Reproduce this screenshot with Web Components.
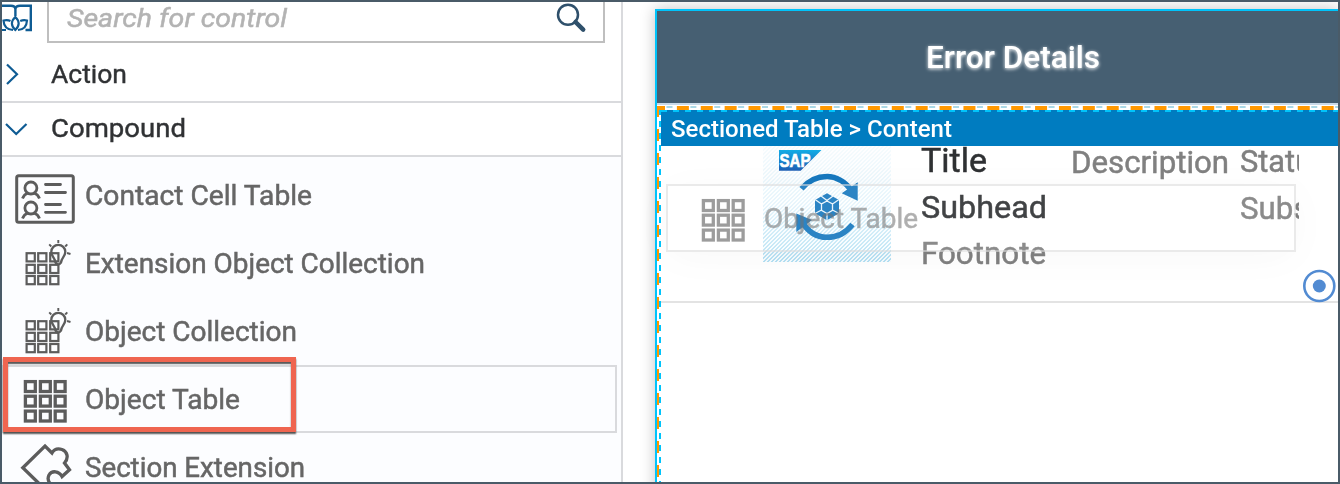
<!DOCTYPE html>
<html lang="en">
<head>
<meta charset="utf-8">
<title>Control editor</title>
<style>
html,body{margin:0;height:100%;overflow:hidden;background:#fff}
body{font-family:Roboto,"Open Sans",sans-serif;color:#2f3133}
</style>
</head>
<body>
<editor-app></editor-app>
<script>
const define = (name, html, setup) => customElements.define(name, class extends HTMLElement {
  constructor() {
    super();
    this.attachShadow({mode: 'open'});
  }
  connectedCallback() {
    const t = document.createElement('template');
    t.innerHTML = typeof html === 'function' ? html(this) : html;
    this.shadowRoot.replaceChildren(t.content.cloneNode(true));
    if (setup) setup(this);
  }
});

/* One line of text, condensed or widened to the advance width in "w". */
define('fit-label', `<style>
  :host{display:block;white-space:nowrap}
  span{display:inline-block;transform-origin:0 50%;white-space:nowrap}
</style><span><slot></slot></span>`, el => {
  const s = el.shadowRoot.querySelector('span');
  const w = s.offsetWidth && s.getBoundingClientRect().width;
  if (w && el.getAttribute('w')) {
    const k = Number(el.getAttribute('w')) / w;
    s.style.transform = `scaleX(${k})`;
    el.style.width = el.getAttribute('w') + 'px';
  }
});

const squares = (xs, ys, size, sw) => ys.map(y => xs.map(x =>
  `<rect x="${x}" y="${y}" width="${size}" height="${size}" stroke-width="${sw}"/>`).join('')).join('');

const icons = {
  contact: `<rect x="14.700" y="14.700" width="56.600" height="46.600" rx="2" stroke-width="3"/>
    <g stroke-width="2.800"><circle cx="28.900" cy="27" r="6"/><path d="M20.500 37.500q1.500-4.200 5.500-5.500M37.500 37.500q-1.500-4.200-5.500-5.500"/>
    <circle cx="28.900" cy="47" r="6"/><path d="M20.500 57.500q1.500-4.200 5.500-5.500M37.500 57.500q-1.500-4.200-5.500-5.500"/>
    <path d="M43.500 23.500H58.500M43.500 31.500H63.500M43.500 43.500H58.500M43.500 51.300H63.500" stroke-linecap="round"/></g>`,
  collection: squares([24.6, 36.2, 48.2], [24.2, 35.8, 47], 8.2, 2.2) +
    `<path d="M53.500 33.500C53 29 49.300 27.500 49.300 22.800a7 7 0 0 1 14 0C63.300 27.500 59.500 29 59 33.500Q56.200 37.500 53.500 33.500Z" stroke-width="2.300"/>
    <path d="M56.300 11V14M47.200 15.300L49.300 17.500M65.300 15.300L63.200 17.500M65 24L68.500 25" stroke-width="1.900"/>`,
  table: squares([23.4, 38.4, 53.2], [16.6, 31.2, 46.1], 9.9, 3.3),
  puzzle: `<path d="M37 50.500L20.800 34.700L43 13L50 20C52 16.500 56 15.300 60 16.500C65.500 18.500 67 25 62.500 30L67.500 36.700L60 43.500C57 38 50 37 47 42C45.500 45 46 48 48 50.500" stroke-width="3.300"/>`
};

define('control-icon', el => `<style>
  :host{display:block;width:83px;height:68px}
  svg{display:block;filter:blur(.6px)}
</style><svg width="83" height="68" viewBox="0 0 83 68" fill="none" stroke="#5c5c5c">${icons[el.getAttribute('name')]}</svg>`);

define('control-row', el => `<style>
  :host{display:flex;height:68px;box-sizing:border-box;width:615px;font-size:27.500px;line-height:70px;color:#666;-webkit-text-stroke:.5px #666}
  :host([selected]){box-shadow:inset 0 0 0 2px #d9dadd}
</style><control-icon name="${el.getAttribute('icon')}"></control-icon><fit-label w="${el.getAttribute('w')}"><slot></slot></fit-label>`);

define('group-row', el => `<style>
  :host{display:flex;align-items:center;height:52px;border-bottom:2px solid #d9dadd;font-size:26.500px;line-height:50px;color:#303234;-webkit-text-stroke:.4px #303234}
  svg{width:49px;height:52px;flex:none}
  fit-label{height:52px}
</style><svg viewBox="0 0 49 52" fill="none" stroke="#0f5c94" stroke-width="2.200"><path d="${
  el.hasAttribute('open') ? 'M4 21L14.200 31L24.500 21' : 'M5 15.500L15 25.300L5 35'}"/></svg><fit-label w="${el.getAttribute('w')}"><slot></slot></fit-label>`);

define('search-bar', `<style>
  :host{display:flex;height:47px}
  .book{width:45px;flex:none}
  .box{box-sizing:border-box;width:558px;height:41px;border:2px solid #bfbfbf;border-top:0;display:flex;justify-content:space-between;padding:0 16px 0 18px;background:#fff}
  fit-label{font:italic 26.500px/31px Roboto,sans-serif;color:#b3b3b3;-webkit-text-stroke:.5px #b3b3b3}
</style>
<svg class="book" width="45" height="41" viewBox="2 2 45 41" fill="none" stroke="#0f5c94" stroke-width="2.400">
  <path d="M2 5.700H11Q15 5.700 15.400 9Q15.800 5.700 20 5.700H30.800V30H25.500M15.400 8V16"/>
  <path d="M15.300 17Q8.500 23.500 15.300 30Q22 23.500 15.300 17ZM10.500 21Q7.500 19.500 3.500 20.500Q4 29.500 13 30M20.200 21Q23.500 19.500 27 20.500Q26.500 29.500 18 30M2 30H6" stroke-width="2.200"/>
</svg>
<div class="box"><fit-label w="220">Search for control</fit-label>
<svg width="32" height="34" viewBox="555 2 32 34" fill="none" stroke="#2f506b"><circle cx="568" cy="14.700" r="10" stroke-width="2.500"/><path d="M575.500 22L583.200 29.700" stroke-width="4.500" stroke-linecap="round"/></svg></div>`);

define('control-palette', `<style>
  :host{display:block;position:relative;width:619px;height:480px;border-right:2px solid #d9dadd;background:#fff;overflow:hidden}
  .list{background:#fcfdff;padding-top:4px;height:340px}
  .mark{position:absolute;left:1px;top:355px;width:283px;height:65px;border:5px solid #ef6550;
    box-shadow:0 2px 1.500px #555,inset 0 2px 1.500px #555}
</style>
<search-bar></search-bar>
<group-row w="76">Action</group-row>
<group-row open w="135">Compound</group-row>
<div class="list">
<control-row icon="contact" w="227">Contact Cell Table</control-row>
<control-row icon="collection" w="340">Extension Object Collection</control-row>
<control-row icon="collection" w="212">Object Collection</control-row>
<control-row icon="table" w="155" selected>Object Table</control-row>
<control-row icon="puzzle" w="220">Section Extension</control-row>
</div>
<div class="mark"></div>`);

define('object-image', `<style>
  :host{display:block;position:relative;width:128px;height:116px}
  .hatch{position:absolute;inset:0;background:repeating-linear-gradient(135deg,#b4e0f3 0 1.414px,#f5fbfe 1.414px 2.828px);
    mask-image:linear-gradient(rgba(0,0,0,.12),rgba(0,0,0,.35) 50%,#000)}
  svg{position:relative;display:block}
</style><div class="hatch"></div>
<svg width="128" height="116" viewBox="763 146 128 116">
  <defs><linearGradient id="g" x2="0" y2="1"><stop stop-color="#12ace5"/><stop offset="1" stop-color="#1f5fb5"/></linearGradient></defs>
  <path d="M779 150H821.500L800.700 170.700H779Z" fill="url(#g)"/>
  <text x="779.500" y="166.500" font-family="Liberation Sans" font-weight="700" font-size="17.500" textLength="31" lengthAdjust="spacingAndGlyphs" fill="#fff" stroke="#fff" stroke-width=".6">SAP</text>
  <g fill="none" stroke="#1778be" stroke-width="5.500"><path d="M801.500 188.800Q812 176.500 827 176.500Q841 176.500 852 191"/><path d="M852.500 224.500Q842.500 237.300 827 237.300Q811 237.300 801.500 221"/></g>
  <path d="M857.700 182.300V200.700L841.700 193.300ZM796.300 213.500V232L812 220Z" fill="#1778be"/>
  <path d="M827 193.300L839 200V213.300L827 220.300L815 213.300V200Z" fill="#1778be"/>
  <g fill="none" stroke="#e6f3fb" stroke-width="1.300"><path d="M827 201L832.500 204V210.300L827 213.500L821.500 210.300V204ZM815 199.500L821.500 204M839 199.500L832.500 204M827 213.500V221M821 196L827 200.500L833 196M827 200.500V202M815 213.500L821.500 210M839 213.500L832.500 210"/></g>
</svg>`);

define('object-cell', `<style>
  :host{display:grid;grid-template-columns:128px 150px 199px 59px;height:157px;box-sizing:border-box;padding-left:102px;
    border-bottom:2px solid #e3e3e3;font-size:32px;line-height:46px;color:#808080;-webkit-text-stroke:.5px}
  .main{padding-left:30px;margin-top:-7px}
  .dark{color:#2f3133}
  .title{font-size:34px;line-height:42px;height:45px}
  .main fit-label:last-child{margin-top:0}
  .desc{padding-left:30px;margin-top:-7px}
  .status{margin-top:-8px;overflow:hidden;height:120px}
  .status fit-label+fit-label{margin-top:1px}
</style>
<object-image></object-image>
<div class="main"><fit-label class="dark title" w="66">Title</fit-label><fit-label class="dark" w="126">Subhead</fit-label><fit-label w="125">Footnote</fit-label></div>
<div class="desc"><fit-label w="158">Description</fit-label></div>
<div class="status"><fit-label w="88">Status</fit-label><fit-label w="140">Substatus</fit-label></div>`);

define('drag-ghost', `<style>
  :host{box-sizing:border-box;display:flex;width:630px;height:68px;border:2px solid #ddd;opacity:.6;
    background:rgba(252,252,252,.15);box-shadow:0 6px 44px rgba(0,0,0,.05);font-size:27.500px;line-height:66px;color:#7b7b7b;-webkit-text-stroke:.5px}
  control-icon{margin-top:-2px;padding-left:12px;width:84px}
</style><control-icon name="table"></control-icon><fit-label w="154">Object Table</fit-label>`);

define('device-preview', `<style>
  :host{display:block;position:relative;flex:1;height:480px;overflow:hidden;background:#fff}
  .device{margin:7px 0 0 32px;width:683px;height:500px;border:2px solid #00c4fb;border-right:0;box-sizing:border-box;
    box-shadow:0 0 14px rgba(0,0,0,.24);background:#fff}
  header{height:92px;background:#465f72;border-bottom:2px solid #c8d9e8;padding-left:269px;color:#fff;font-size:32px;line-height:92px;
    font-weight:500;text-shadow:0 1px 4px #fff}
  .dashes{display:block;height:5px}
  .body{display:flex}
  .edge{display:block;width:4px;height:390px;flex:none}
  .content{width:677px;flex:none}
  .bar{height:36px;background:#007cc0;color:#fff;font-size:23px;line-height:39px;font-weight:500;padding-left:10px;
    background-image:repeating-linear-gradient(90deg,#00c4fb 0 6px,#007cc0 6px 12px);background-size:100% 2px;background-repeat:no-repeat}
  drag-ghost{position:absolute;left:43px;top:182px}
  .handle{position:absolute;left:679px;top:267px}
</style>
<div class="device">
  <header><fit-label w="174">Error Details</fit-label></header>
  <svg class="dashes" width="681" height="5" viewBox="657 105 681 5"><path d="M666.500 107H1338" stroke="#a9d8e6" stroke-width="2" stroke-dasharray="6 5.940"/><path d="M653 108H1338" stroke="#ff9800" stroke-width="4" stroke-dasharray="12 11.880"/></svg>
  <div class="body">
    <svg class="edge" width="4" height="390" viewBox="657 110 4 390"><path d="M658 105V500" stroke="#ff9800" stroke-width="2" stroke-dasharray="12 12"/><path d="M660 109V500" stroke="#00c4fb" stroke-width="2" stroke-dasharray="6 6"/></svg>
    <div class="content"><div class="bar"><fit-label w="281">Sectioned Table &gt; Content</fit-label></div><object-cell></object-cell></div>
  </div>
</div>
<drag-ghost></drag-ghost>
<svg class="handle" width="34" height="34" viewBox="0 0 34 34"><circle cx="17.300" cy="17" r="15" fill="#fff" stroke="#528bd2" stroke-width="2.600"/><circle cx="17.300" cy="17" r="6.500" fill="#528bd2"/></svg>`);

define('editor-app', `<style>
  :host{display:flex;box-sizing:border-box;width:1340px;height:484px;border:2px solid #4a5b68;overflow:hidden}
</style><control-palette></control-palette><device-preview></device-preview>`);

</script>
</body>
</html>
